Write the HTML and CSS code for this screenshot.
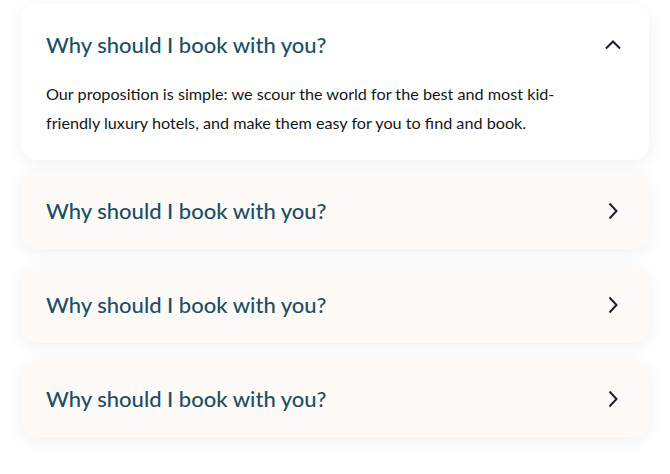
FILE: index.html
```html
<!DOCTYPE html>
<html>
<head>
<meta charset="utf-8">
<link rel="stylesheet" href="styles.css">
</head>
<body>
<div class="faq">
  <div class="item open">
    <div class="head">
      <h3 class="q">Why should I book with you?</h3>
      <svg class="chev" width="18" height="18" viewBox="0 0 18 18"><path d="M2 12.5 L9 5.5 L16 12.5" fill="none" stroke="#1b2130" stroke-width="2"/></svg>
    </div>
    <p class="a">Our proposition is simple: we scour the world for the best and most kid-friendly luxury hotels, and make them easy for you to find and book.</p>
  </div>
  <div class="item">
    <div class="head">
      <h3 class="q">Why should I book with you?</h3>
      <svg class="chev" width="18" height="18" viewBox="0 0 18 18"><path d="M5.5 1.5 L12.5 9 L5.5 16.5" fill="none" stroke="#1b2130" stroke-width="2"/></svg>
    </div>
  </div>
  <div class="item">
    <div class="head">
      <h3 class="q">Why should I book with you?</h3>
      <svg class="chev" width="18" height="18" viewBox="0 0 18 18"><path d="M5.5 1.5 L12.5 9 L5.5 16.5" fill="none" stroke="#1b2130" stroke-width="2"/></svg>
    </div>
  </div>
  <div class="item">
    <div class="head">
      <h3 class="q">Why should I book with you?</h3>
      <svg class="chev" width="18" height="18" viewBox="0 0 18 18"><path d="M5.5 1.5 L12.5 9 L5.5 16.5" fill="none" stroke="#1b2130" stroke-width="2"/></svg>
    </div>
  </div>
</div>
</body>
</html>
```
FILE: styles.css
```css
html, body {
  margin: 0;
  padding: 0;
  background: #ffffff;
}
body {
  font-family: Lato, "Open Sans", sans-serif;
  padding: 4px 21px 0 21px;
  min-height: 474px;
  box-sizing: border-box;
}
.faq {
  display: flex;
  flex-direction: column;
  gap: 17px;
}
.item {
  background: #fefaf7;
  border-radius: 16px;
  box-shadow: 0 4px 18px rgba(0, 0, 0, 0.06);
  padding: 24px 27px 24px 25px;
}
.item.open {
  background: #ffffff;
  padding-top: 26px;
  padding-bottom: 23px;
  margin-bottom: -5px;
}
.head {
  display: flex;
  align-items: center;
  justify-content: space-between;
}
.q {
  margin: 0;
  font-size: 22px;
  font-weight: 500;
  line-height: 29px;
  color: #1d4f64;
}
.chev {
  display: block;
  flex: none;
}
.a {
  margin: 20px 0 0 0;
  font-size: 16.2px;
  line-height: 29px;
  color: #161616;
  max-width: 520px;
}
```
